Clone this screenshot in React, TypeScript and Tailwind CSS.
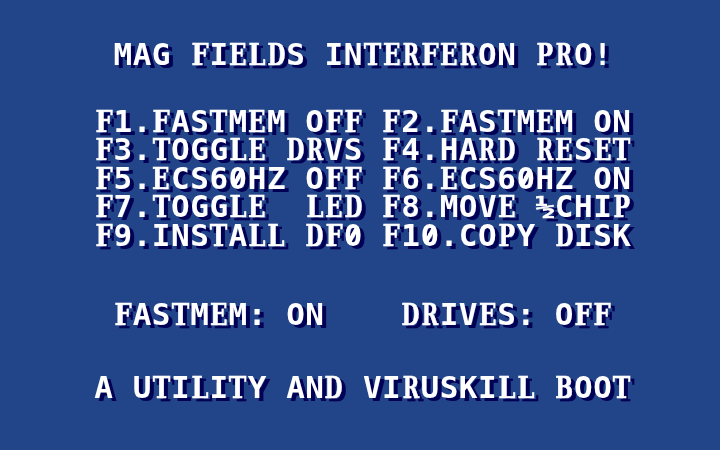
// Slab letters are wider than a character cell; each is narrowed to fit it.
const slabScale: Record<string, number> = {
  F: 0.78,
  E: 0.74,
  L: 0.78,
  T: 0.76,
  D: 0.67,
  P: 0.71,
  R: 0.64,
  B: 0.68,
};

function Glyph({ char }: { char: string }) {
  if (char === "½") {
    return (
      <span className="inline-flex w-[19.2px] justify-center align-baseline">
        <span className="inline-block origin-[50%_55%] scale-x-[1.05] scale-y-[0.77] [-webkit-text-stroke:0.8px_white]">½</span>
      </span>
    );
  }
  if (char === "0") {
    return (
      <span className="relative inline-block w-[19.2px] text-center align-baseline after:absolute after:top-[7px] after:left-[8px] after:h-[14px] after:w-[3.5px] after:rotate-[28deg] after:bg-white after:content-['']">
        0
      </span>
    );
  }
  const scale = slabScale[char];
  if (scale === undefined) {
    return <span className="inline-block w-[19.2px] text-center align-baseline">{char}</span>;
  }
  return (
    <span className="inline-flex w-[19.2px] justify-center align-baseline">
      <span
        className="inline-block font-['DejaVu_Serif',serif] [-webkit-text-stroke:0.6px_white]"
        style={{ transform: `scale(${scale}, 0.97)` }}
      >
        {char}
      </span>
    </span>
  );
}

function Line({ text }: { text: string }) {
  return (
    <div className="h-[28.5px] whitespace-pre">
      {Array.from(text).map((char, i) => (
        <Glyph key={i} char={char} />
      ))}
    </div>
  );
}

const menu = [
  "F1.FASTMEM OFF F2.FASTMEM ON",
  "F3.TOGGLE DRVS F4.HARD RESET",
  "F5.ECS60HZ OFF F6.ECS60HZ ON",
  "F7.TOGGLE  LED F8.MOVE ½CHIP",
  "F9.INSTALL DF0 F10.COPY DISK",
];

export default function App() {
  return (
    <main className="h-[450px] w-[720px] overflow-hidden bg-[#224488]">
      <div className="flex flex-col pt-[40px] pl-[94px] font-['DejaVu_Sans_Mono',monospace] text-[31px] leading-[28.5px] font-bold text-white [filter:drop-shadow(4px_3px_0_#000055)]">
        <header className="mb-[38px]">
          <Line text=" MAG FIELDS INTERFERON PRO!" />
        </header>
        <section className="mb-[51px]">
          {menu.map((row) => (
            <Line key={row} text={row} />
          ))}
        </section>
        <section className="mb-[44px]">
          <Line text=" FASTMEM: ON    DRIVES: OFF" />
        </section>
        <footer>
          <Line text="A UTILITY AND VIRUSKILL BOOT" />
        </footer>
      </div>
    </main>
  );
}
